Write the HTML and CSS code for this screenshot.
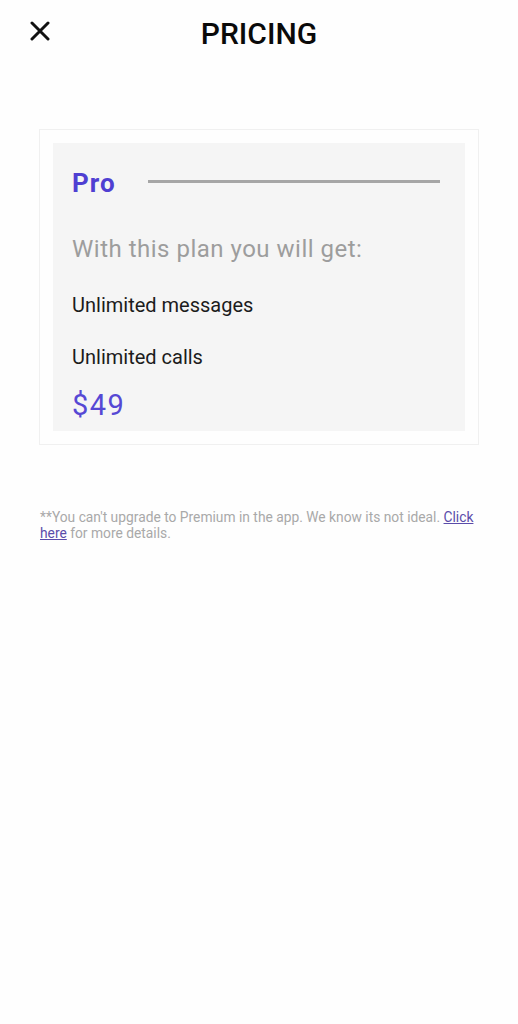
FILE: index.html
```html
<!DOCTYPE html>
<html lang="en">
<head>
<meta charset="utf-8">
<title>Pricing</title>
<link rel="stylesheet" href="styles.css">
</head>
<body>
<header class="topbar">
  <button class="close" aria-label="Close">
    <svg width="20" height="20" viewBox="0 0 20 20"><path d="M2 2 L18 18 M18 2 L2 18" stroke="#111" stroke-width="3" stroke-linecap="round" fill="none"/></svg>
  </button>
  <h1 class="title">PRICING</h1>
  <span></span>
</header>
<main class="content">
  <section class="card">
    <div class="plan">
      <div class="plan-head">
        <span class="plan-name">Pro</span>
        <span class="plan-rule"></span>
      </div>
      <p class="plan-intro">With this plan you will get:</p>
      <p class="feature first">Unlimited messages</p>
      <p class="feature">Unlimited calls</p>
      <p class="price">$49</p>
    </div>
  </section>
  <p class="note">**You can't upgrade to Premium in the app. We know its not ideal. <a href="#">Click here</a> for more details.</p>
</main>
</body>
</html>
```
FILE: styles.css
```css
* { box-sizing: border-box; }
html, body { margin: 0; padding: 0; background: #fefefe; }
body { font-family: Roboto, "Noto Sans", sans-serif; color: #111; }

.topbar {
  display: grid;
  grid-template-columns: 1fr auto 1fr;
  align-items: start;
  padding: 16px 0 0 30px;
  height: 52px;
}
.close {
  background: none; border: 0; padding: 0; margin: 5px 0 0 0;
  width: 20px; height: 20px; display: block; justify-self: start;
}
.close svg { display: block; }
.title {
  margin: 0 0 0 -30px;
  font-size: 30px; line-height: 36px; font-weight: 500;
  color: #0a0a0a; letter-spacing: 0;
}

.content { width: 440px; margin: 77px auto 0; }
.card {
  border: 1px solid #f0f0f0;
  padding: 13px;
  background: #fefefe;
}
.plan {
  background: #f5f5f5;
  padding: 25px 19px 9px 19px;
}
.plan-head { display: flex; align-items: center; }
.plan-name {
  font-size: 26px; line-height: 30px; font-weight: 700; color: #4f3fd2;
  letter-spacing: 1px;
}
.plan-rule {
  flex: 1; height: 3px; background: #a6a6a6;
  margin: 0 6px 0 32px; position: relative; top: -2px;
}
.plan-intro {
  margin: 37px 0 0; font-size: 24px; line-height: 28px; color: #9d9d9d;
  letter-spacing: 0.5px;
}
.feature {
  margin: 28px 0 0; font-size: 20px; line-height: 24px; color: #1c1c1c;
}
.feature.first { margin-top: 30px; }
.price {
  margin: 19px 0 0; font-size: 29px; line-height: 34px; color: #5648d4;
  letter-spacing: 1.5px;
}
.note {
  margin: 64px 0 0 1px; font-size: 13.8px; line-height: 16px; color: #a9a9a9;
}
.note a { color: #5a4caa; text-decoration: underline; }
```
